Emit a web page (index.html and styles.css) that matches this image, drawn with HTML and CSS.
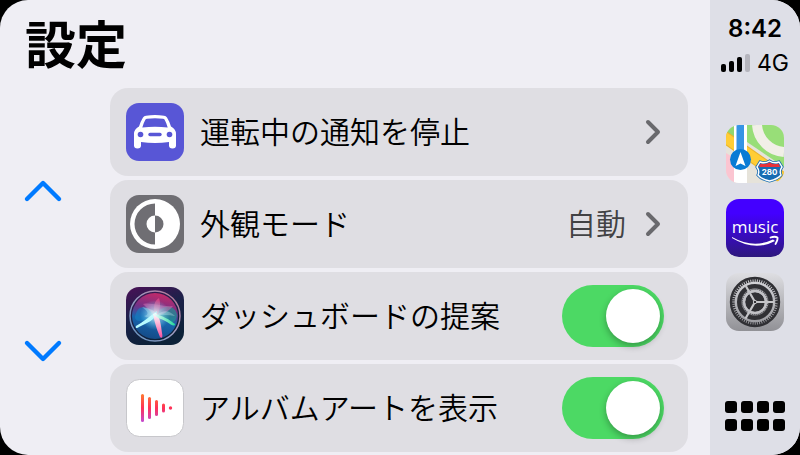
FILE: index.html
```html
<!DOCTYPE html>
<html lang="ja">
<head>
<meta charset="utf-8">
<meta name="viewport" content="width=device-width, initial-scale=1">
<title>設定</title>
<link rel="stylesheet" href="styles.css">
</head>
<body>
<div class="screen">
  <main class="settings">
    <h1 class="title">設定</h1>
    <div class="content">
      <nav class="scroller" aria-label="スクロール">
        <button class="scroll-button" type="button" aria-label="上へ">
          <svg width="40" height="26" viewBox="0 0 40 26"><path d="M4 21 20 5 36 21" fill="none" stroke="#007aff" stroke-width="4.400" stroke-linecap="round" stroke-linejoin="round"/></svg>
        </button>
        <button class="scroll-button" type="button" aria-label="下へ">
          <svg width="40" height="26" viewBox="0 0 40 26"><path d="M4 5 20 21 36 5" fill="none" stroke="#007aff" stroke-width="4.400" stroke-linecap="round" stroke-linejoin="round"/></svg>
        </button>
      </nav>
      <div class="list">
        <button class="row" type="button">
          <svg class="icon" viewBox="0 0 58 58">
            <rect width="58" height="58" rx="13" fill="#5856d6"/>
            <path fill="#fff" fill-rule="evenodd" d="M17 14.500Q18 13 20 12.700Q29 11.500 38 12.700Q40 13 41 14.500Q43.500 18.500 45 23.500Q50 26 50 31V42.500Q50 45.500 46.500 45.500T43 42.500V39Q29 41 15 39V42.500Q15 45.500 11.500 45.500T8 42.500V31Q8 26 13 23.500Q14.500 18.500 17 14.500ZM19.500 16.500Q17.500 20 16.300 24.500Q29 23 41.700 24.500Q40.500 20 38.500 16.500Q38 15.800 37 15.700Q29 15 21 15.700Q20 15.800 19.500 16.500Z"/>
            <circle cx="14.500" cy="31.500" r="2.800" fill="#5856d6"/>
            <circle cx="43.500" cy="31.500" r="2.800" fill="#5856d6"/>
            <path d="M24 31.500H34" stroke="#5856d6" stroke-width="3.400" stroke-linecap="round"/>
          </svg>
          <span class="label">運転中の通知を停止</span>
          <svg class="chevron" width="20" height="28" viewBox="0 0 20 28"><path d="M4 4 14 14 4 24" fill="none" stroke="#69696d" stroke-width="4" stroke-linecap="round" stroke-linejoin="round"/></svg>
        </button>
        <button class="row" type="button">
          <svg class="icon" viewBox="0 0 58 58">
            <rect width="58" height="58" rx="13" fill="#6f6e73"/>
            <circle cx="29" cy="29" r="25" fill="#fff"/>
            <path d="M29 8.500A20.500 20.500 0 0 0 29 49.500V37.500A8.500 8.500 0 0 1 29 20.500Z" fill="#6f6e73"/>
            <path d="M29 20.500A8.500 8.500 0 0 1 29 37.500Z" fill="#6f6e73"/>
          </svg>
          <span class="label">外観モード</span>
          <span class="value">自動</span>
          <svg class="chevron" width="20" height="28" viewBox="0 0 20 28"><path d="M4 4 14 14 4 24" fill="none" stroke="#69696d" stroke-width="4" stroke-linecap="round" stroke-linejoin="round"/></svg>
        </button>
        <label class="row">
          <svg class="icon" viewBox="0 0 58 58">
            <defs>
              <linearGradient id="siri-back" x1="0" y1="0" x2=".4" y2="1"><stop offset="0" stop-color="#4b1157"/><stop offset=".5" stop-color="#1b2149"/><stop offset="1" stop-color="#0c2138"/></linearGradient>
              <linearGradient id="siri-orb" x1=".6" y1="0" x2=".4" y2="1"><stop offset="0" stop-color="#c52a68"/><stop offset=".35" stop-color="#743087"/><stop offset=".6" stop-color="#1865ad"/><stop offset="1" stop-color="#154a86"/></linearGradient>
              <linearGradient id="siri-ring" x1="0" y1="1" x2="1" y2="0"><stop offset="0" stop-color="#5c8fbc"/><stop offset=".5" stop-color="#9d9dc2"/><stop offset="1" stop-color="#b9708f"/></linearGradient>
              <radialGradient id="siri-glow"><stop offset="0" stop-color="#fff"/><stop offset=".25" stop-color="#d5ffff" stop-opacity=".9"/><stop offset="1" stop-color="#65dbff" stop-opacity="0"/></radialGradient>
              <linearGradient id="siri-pink" x1="0" y1="0" x2="0" y2="1"><stop offset="0" stop-color="#fff"/><stop offset="1" stop-color="#f84e9d"/></linearGradient>
              <linearGradient id="siri-green"><stop offset="0" stop-color="#efffff"/><stop offset="1" stop-color="#22d99a"/></linearGradient>
            </defs>
            <rect width="58" height="58" rx="13" fill="url(#siri-back)"/>
            <circle cx="29" cy="29" r="23" fill="url(#siri-orb)"/>
            <path d="M30 28C39 14 50 20 51 28C50 38 42 38 30 28Z" fill="#169b95" opacity=".65"/>
            <path d="M29 28C17 15 11 20 9 30C9 36 19 35 29 28Z" fill="#167ec0" opacity=".65"/>
            <path d="M17 17C26 15 35 20 47 19C41 26 35 29 28 28Z" fill="#db6bb1" opacity=".5"/>
            <path d="M29 27C27 20 28 14 33 11C35 17 34 23 31 29Z" fill="#ff6297" opacity=".5"/>
            <circle cx="29" cy="28" r="15" fill="url(#siri-glow)" opacity=".75"/>
            <path d="M31 24C24 29 17 35 10 39C9 41 11 42 13 40C21 36 30 33 31 24Z" fill="#b8fbff"/>
            <path d="M27 27C29 38 32 45 34 50C36 52 37 50 36 46C35 38 34 30 30 26Z" fill="url(#siri-pink)"/>
            <path d="M28 27C36 28 44 33 49 37C49 40 45 38 41 35C35 31 31 32 28 27Z" fill="url(#siri-green)"/>
            <path d="M16 20Q29 22 31 28Q40 20 49 29Q39 27 29 29Q23 32 18 29Q26 27 16 20Z" fill="#d9ffff" opacity=".3"/>
            <circle cx="29" cy="29" r="25" fill="none" stroke="url(#siri-ring)" stroke-width="1.500"/>
          </svg>
          <span class="label">ダッシュボードの提案</span>
          <input class="switch" type="checkbox" role="switch" checked>
        </label>
        <label class="row">
          <svg class="icon" viewBox="0 0 58 58">
            <defs><linearGradient id="wave" gradientUnits="userSpaceOnUse" x1="0" y1="15" x2="0" y2="43"><stop offset="0" stop-color="#ff7a30"/><stop offset=".5" stop-color="#ff3157"/><stop offset="1" stop-color="#c34bd2"/></linearGradient></defs>
            <rect x=".5" y=".5" width="57" height="57" rx="13" fill="#fff" stroke="#c7c7cb"/>
            <g fill="url(#wave)"><rect x="15" y="15" width="3" height="28" rx="1.500"/><rect x="22" y="18" width="3" height="22" rx="1.500"/><rect x="29" y="21" width="3" height="16" rx="1.500"/><rect x="36" y="24.500" width="3" height="9" rx="1.500"/><circle cx="44.500" cy="29" r="1.700"/></g>
          </svg>
          <span class="label">アルバムアートを表示</span>
          <input class="switch" type="checkbox" role="switch" checked>
        </label>
      </div>
    </div>
  </main>
  <aside class="dock">
    <div class="status">
      <time class="clock">8:42</time>
      <div class="network">
        <svg width="30" height="18" viewBox="0 0 30 18"><rect x="0" y="10" width="5" height="8" rx="2"/><rect x="8" y="7" width="5" height="11" rx="2"/><rect x="16" y="3" width="5" height="15" rx="2"/><rect x="24" y="0" width="5" height="18" rx="2" fill="#b5b5bd"/></svg>
        <span>4G</span>
      </div>
    </div>
    <nav class="apps" aria-label="アプリ">
      <button class="app" type="button" aria-label="マップ">
        <svg class="icon" viewBox="0 0 58 58">
          <defs><clipPath id="map-clip"><rect width="58" height="58" rx="13"/></clipPath></defs>
          <g clip-path="url(#map-clip)">
            <rect width="58" height="58" fill="#e6e3da"/>
            <path d="M21 0H58V42L21 17Z" fill="#98de78"/>
            <path d="M0 28 10 34V58H0Z" fill="#fbc5d1"/>
            <path d="M0 0H8V12L0 8Z" fill="#91d66f"/>
            <path d="M31 0A29 29 0 0 0 58 27" fill="none" stroke="#f1efe7" stroke-width="10"/>
            <path d="M-3 11 61 56" stroke="#e9b42c" stroke-width="12"/>
            <path d="M-3 11 61 56" stroke="#ffcd35" stroke-width="10"/>
            <path d="M8 0H21V58H8Z" fill="#fff"/>
            <path d="M10.500 0H18V34H10.500Z" fill="#3594e5"/>
            <circle cx="14.500" cy="34.500" r="10.500" fill="#087bd5"/>
            <path d="M14.500 27 19.500 41 14.500 38.500 9.500 41Z" fill="#fff"/>
            <path d="M34 37Q39 39 43.500 36Q48 39 53 37L56 42Q53 46 55 50Q52 54 43.500 56Q35 54 32 50Q34 46 31 42Z" fill="#176cb3" stroke="#176cb3" stroke-width="3"/>
            <path d="M34 37Q39 39 43.500 36Q48 39 53 37L56 42Q53 46 55 50Q52 54 43.500 56Q35 54 32 50Q34 46 31 42Z" fill="#176cb3" stroke="#fff" stroke-width="1.400"/>
            <path d="M34.500 38.500Q39 40 43.500 37.500Q48 40 52.500 38.500L54 42H33Z" fill="#e6323b"/>
            <text class="route-number" x="43.500" y="50" text-anchor="middle">280</text>
          </g>
        </svg>
      </button>
      <button class="app" type="button" aria-label="Amazon Music">
        <svg class="icon" viewBox="0 0 58 58">
          <defs><linearGradient id="music-back" x1="0" y1="0" x2="0" y2="1"><stop offset=".25" stop-color="#4300ff"/><stop offset="1" stop-color="#2d187c"/></linearGradient></defs>
          <rect width="58" height="58" rx="13" fill="url(#music-back)"/>
          <text class="music-name" x="29" y="34" text-anchor="middle">music</text>
          <path d="M6 38Q27 50 47 40.500L49 42Q29 53 6 39Z" fill="#fff"/>
          <path d="M44.500 38.500Q49 37 51.500 38.500Q52 41 49.500 45" fill="none" stroke="#fff" stroke-width="1.800" stroke-linecap="round"/>
        </svg>
      </button>
      <button class="app" type="button" aria-label="設定">
        <svg class="icon" viewBox="0 0 58 58">
          <defs><linearGradient id="gear-back" x1="0" y1="0" x2="0" y2="1"><stop offset="0" stop-color="#dedee2"/><stop offset="1" stop-color="#919196"/></linearGradient></defs>
          <rect width="58" height="58" rx="13" fill="url(#gear-back)"/>
          <g fill="none">
            <circle cx="29" cy="29" r="24" stroke="#303034" stroke-width="2.400"/>
            <circle cx="29" cy="29" r="21.800" stroke="#303034" stroke-width="3" stroke-dasharray="1.380 .903"/>
            <circle cx="29" cy="29" r="15.700" stroke="#303034" stroke-width="4.600"/>
            <circle cx="29" cy="29" r="12.900" stroke="#56565a" stroke-width="1.600" stroke-dasharray="1.200 .826"/>
            <circle cx="29" cy="29" r="9.800" fill="#303034"/>
            <path d="M29 29H48M29 29 19.500 12.500M29 29 19.500 45.500" stroke="#c5c5c8" stroke-width="2.200"/>
            <circle cx="29" cy="29" r="11" stroke="#c1c1c5" stroke-width="2"/>
            <circle cx="29" cy="29" r="1.700" fill="#303034" stroke="#c5c5c8"/>
          </g>
        </svg>
      </button>
    </nav>
    <button class="home" type="button" aria-label="ホーム">
      <svg width="60" height="30" viewBox="0 0 60 30"><g id="dots"><rect width="12" height="12" rx="3"/><rect x="16" width="12" height="12" rx="3"/><rect x="32" width="12" height="12" rx="3"/><rect x="48" width="12" height="12" rx="3"/></g><use href="#dots" y="18"/></svg>
    </button>
  </aside>
</div>
</body>
</html>
```
FILE: styles.css
```css
* { box-sizing: border-box; }

body {
  margin: 0;
  background: #000;
  color: #000;
  font-family: Inter, "Noto Sans CJK JP", sans-serif;
}

button {
  padding: 0;
  border: 0;
  background: none;
  color: inherit;
  font: inherit;
  text-align: left;
}

svg { display: block; }

.screen {
  display: grid;
  grid-template-columns: minmax(0, 1fr) 90px;
  min-height: 100vh;
  border-radius: 28px;
  overflow: hidden;
  background: #efeef4;
}

.settings {
  display: flex;
  flex-direction: column;
}

.title {
  margin: 0;
  padding: 0 25px 4px;
  font-family: "Noto Sans CJK JP", sans-serif;
  font-size: 51px;
  font-weight: 700;
  line-height: 84px;
}

.content {
  display: grid;
  grid-template-columns: 110px minmax(0, 1fr);
  flex: 1;
  padding-right: 22px;
}

.scroller {
  display: flex;
  flex-direction: column;
  align-items: flex-start;
  gap: 134px;
  padding: 90px 0 0 23px;
}

.list {
  display: flex;
  flex-direction: column;
  gap: 4px;
}

.row {
  display: flex;
  align-items: center;
  width: 100%;
  height: 88px;
  padding: 0 24px 0 16px;
  border-radius: 18px;
  background: #dfdee3;
  font-family: "Noto Sans CJK JP", sans-serif;
  font-size: 30px;
  line-height: 40px;
}

.icon {
  flex: none;
  width: 58px;
  height: 58px;
}

.label,
.value {
  padding-bottom: 4px;
  font-weight: 350;
}

.label {
  flex: 1;
  padding-left: 16px;
}

.value {
  margin-right: 18px;
  color: #424244;
}

.switch {
  display: flex;
  justify-content: flex-end;
  width: 102px;
  height: 62px;
  margin: 0;
  padding: 4px;
  border-radius: 31px;
  background: #4cd964;
  appearance: none;
}

.switch::before {
  content: "";
  width: 54px;
  height: 54px;
  border-radius: 50%;
  background: #fff;
  box-shadow: 0 3px 7px rgb(0 0 0 / 30%);
}

.switch:not(:checked) {
  justify-content: flex-start;
  background: #b9b9be;
}

.dock {
  display: flex;
  flex-direction: column;
  align-items: center;
  padding: 15px 0 24px;
  background: #dedfe7;
}

.status {
  display: flex;
  flex-direction: column;
  align-items: center;
  gap: 6px;
}

.clock {
  font-size: 24px;
  font-weight: 600;
  line-height: 28px;
}

.network {
  display: flex;
  align-items: center;
  gap: 6px;
  font-size: 23px;
  line-height: 28px;
}

.apps {
  display: flex;
  flex-direction: column;
  gap: 16px;
  margin-top: 48px;
}

.home { margin-top: auto; }

.route-number {
  fill: #fff;
  font: 700 8px Inter, sans-serif;
}

.music-name {
  fill: #fff;
  font: 500 17px "Open Sans", sans-serif;
}
```
